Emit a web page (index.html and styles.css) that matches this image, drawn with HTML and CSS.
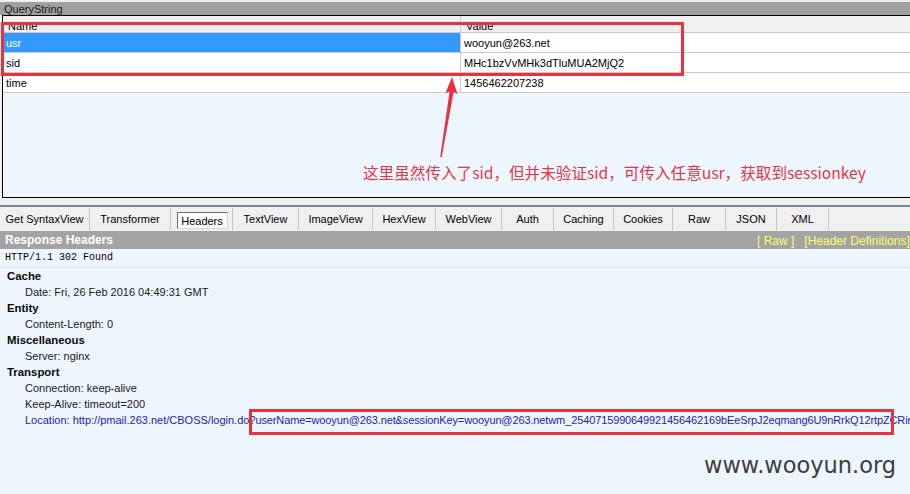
FILE: index.html
```html
<!DOCTYPE html>
<html>
<head>
<meta charset="utf-8">
<link rel="stylesheet" href="styles.css">
</head>
<body>
<div class="page">
  <div class="qs-title">QueryString</div>
  <div class="qs-table">
    <div class="row head"><div class="cell name">Name</div><div class="cell val">Value</div></div>
    <div class="row"><div class="cell name sel">usr</div><div class="cell val">wooyun@263.net</div></div>
    <div class="row"><div class="cell name">sid</div><div class="cell val">MHc1bzVvMHk3dTluMUA2MjQ2</div></div>
    <div class="row"><div class="cell name">time</div><div class="cell val">1456462207238</div></div>
    <div class="note">这里虽然传入了sid，但并未验证sid，可传入任意usr，获取到sessionkey</div>
  </div>
  <div class="tabs">
    <div class="tab">Get SyntaxView</div>
    <div class="tab">Transformer</div>
    <div class="tab"><span class="active">Headers</span></div>
    <div class="tab">TextView</div>
    <div class="tab">ImageView</div>
    <div class="tab">HexView</div>
    <div class="tab">WebView</div>
    <div class="tab">Auth</div>
    <div class="tab">Caching</div>
    <div class="tab">Cookies</div>
    <div class="tab">Raw</div>
    <div class="tab">JSON</div>
    <div class="tab">XML</div>
  </div>
  <div class="resp-bar">
    <span class="resp-title">Response Headers</span>
    <span class="resp-links"><span>[ Raw ]</span><span>[Header Definitions]</span></span>
  </div>
  <div class="resp-body">
    <div class="status">HTTP/1.1 302 Found</div>
    <div class="groups">
      <div class="grp">Cache</div>
      <div class="hdr">Date: Fri, 26 Feb 2016 04:49:31 GMT</div>
      <div class="grp">Entity</div>
      <div class="hdr">Content-Length: 0</div>
      <div class="grp">Miscellaneous</div>
      <div class="hdr">Server: nginx</div>
      <div class="grp">Transport</div>
      <div class="hdr">Connection: keep-alive</div>
      <div class="hdr">Keep-Alive: timeout=200</div>
      <div class="hdr loc">Location: http://pmail.263.net/CBOSS/login.do<span class="q">?userName=wooyun@263.net&amp;sessionKey=wooyun@263.netwm_2540715990649921456462169bEeSrpJ2eqmang6U9nRrkQ12rtpZCRim</span></div>
    </div>
  </div>

  <div class="redbox box1"></div>
  <div class="redbox box2"></div>
  <svg class="arrow" width="910" height="494" viewBox="0 0 910 494">
    <polygon points="452,77 457.5,94 453.6,92 441.8,157 440.2,157 449.6,91.5 445.5,93" fill="#e8323f"/>
  </svg>
  <div class="watermark">www.wooyun.org</div>
</div>
</body>
</html>
```

FILE: styles.css
```css
* { box-sizing: border-box; }
html, body { margin: 0; padding: 0; }
body {
  background: #f0f0f0;
  font-family: "Liberation Sans", Arial, sans-serif;
  font-size: 11px;
  color: #000;
}
.page {
  position: relative;
  width: 910px;
  height: 494px;
  overflow: hidden;
  background: #f0f0f0;
}
.qs-title {
  margin-top: 2px;
  height: 13px;
  line-height: 14px;
  background: #a0a0a0;
  color: #1a1a1a;
  padding-left: 4px;
}
.qs-table {
  margin-left: 2px;
  height: 183px;
  border: 1px solid #000;
  border-right: none;
  background: #eef6fd;
}
.row {
  display: grid;
  grid-template-columns: 458px 1fr;
  height: 20px;
  border-bottom: 1px solid #c9c9c9;
  background: #fff;
}
.row.head {
  height: 17px;
  background: #f0f0f0;
}
.cell {
  display: flex;
  align-items: center;
  white-space: nowrap;
  overflow: hidden;
}
.cell.name { padding-left: 3px; border-right: 1px solid #c9c9c9; }
.cell.val { padding-left: 3px; }
.row.head .cell { padding-top: 3px; padding-left: 5px; }
.cell.sel { background: #3399ff; color: #fff; }
.note {
  margin-top: 70px;
  padding-left: 360px;
  font-family: "Noto Sans CJK SC", "Liberation Sans", sans-serif;
  font-size: 15.6px;
  line-height: 18px;
  color: #e8334a;
  white-space: nowrap;
}
.tabs {
  margin-top: 7px;
  border-top: 2px solid #74869a;
  height: 26px;
  display: grid;
  grid-template-columns: 90px 81px 62px 66px 74px 63px 66px 52px 60px 59px 53px 51px 52px;
  align-items: start;
}
.tab {
  height: 22px;
  margin-top: 1px;
  border-right: 1px solid #c6c6c6;
  display: flex;
  align-items: center;
  justify-content: center;
  white-space: nowrap;
}
.tab .active {
  display: flex;
  align-items: center;
  justify-content: center;
  width: 51px;
  height: 17px;
  margin-top: 3px;
  margin-left: 1px;
  background: #fcfcfc;
  border-top: 1px solid #6d6d6d;
  border-left: 1px solid #6d6d6d;
  border-right: 1px solid #d8d8d8;
  border-bottom: 1px solid #d8d8d8;
  padding-top: 1px;
}
.resp-bar {
  height: 18px;
  background: #a3a3a3;
  display: flex;
  align-items: center;
  padding-left: 5px;
  white-space: nowrap;
  overflow: hidden;
}
.resp-title {
  flex: 1;
  color: #fff;
  font-weight: bold;
  font-size: 12px;
}
.resp-links {
  display: flex;
  gap: 10px;
  width: 153px;
  flex: none;
  color: #ffff6a;
  font-size: 12px;
  padding-top: 1px;
}
.resp-body {
  height: 245px;
  background: #eef6fd;
}
.status {
  height: 19px;
  padding-left: 5px;
  padding-top: 3px;
  font-family: "Liberation Mono", "Courier New", monospace;
  font-size: 10px;
  border-bottom: 1px solid #dfe7ef;
}
.grp {
  height: 16px;
  line-height: 16px;
  padding-left: 7px;
  font-weight: bold;
  font-size: 11.4px;
  color: #0a0a0a;
}
.hdr {
  height: 16px;
  line-height: 16px;
  padding-left: 25px;
  color: #1a1a1a;
  white-space: nowrap;
  overflow: hidden;
}
.hdr.loc { color: #2222b0; }
.hdr.loc .q { letter-spacing: -0.12px; }
.redbox {
  position: absolute;
  border: 3px solid #e8323f;
}
.box1 { left: 1px; top: 22px; width: 683px; height: 54px; }
.box2 { left: 249px; top: 409px; width: 645px; height: 26px; }
.arrow { position: absolute; left: 0; top: 0; }
.watermark {
  position: absolute;
  left: 704px;
  top: 452px;
  font-family: "DejaVu Sans", sans-serif;
  font-size: 22.5px;
  color: #3c3c3c;
  white-space: nowrap;
}
```
